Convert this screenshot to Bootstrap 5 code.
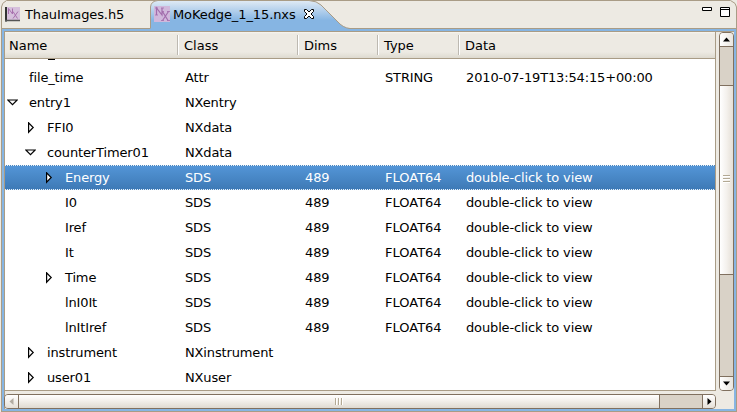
<!DOCTYPE html>
<html lang="en">
<head>
<meta charset="utf-8">
<meta name="viewport" content="width=device-width, initial-scale=1">
<title>MoKedge_1_15.nxs</title>
<link href="https://cdn.jsdelivr.net/npm/bootstrap@5.3.0/dist/css/bootstrap.min.css" rel="stylesheet">
<style>
:root{--tan:#a99c86;--face:#edeae3;--blue:#86b5e3;--edge:#80705f}
body{width:737px;height:412px;background:var(--face);font:13px/25px "DejaVu Sans",sans-serif;color:#000}
svg{display:block;flex:none}
.tabstrip{height:28px}
.shapes{position:absolute;left:0;top:0}
.tab-a{width:150px;padding-left:5px}
.tab-b{padding-left:4px}
.tabtext{line-height:29px;white-space:nowrap;letter-spacing:-.1px}
.tab-a .tabtext{margin-left:5px}
.tab-b .tabtext{margin-left:3px}
.closer{margin-left:7px}
.view{margin-left:1px;width:736px;height:384px;border:1px solid var(--tan);background:var(--blue);padding:2px}
.inner{background:var(--face);border-left:1px solid var(--tan);border-top:1px solid var(--tan)}
.tree{width:711px;height:359px;border-right:1px solid var(--tan);border-bottom:1px solid var(--tan);background:#fff}
.cols{display:grid;grid-template-columns:173px 120px 80px 81px 1fr;white-space:nowrap}
.heads{height:27px;background:linear-gradient(#f7f5f1 0,#edeae3 2px,#edeae3 20px,#dedad0 26px);border-bottom:1px solid var(--tan);line-height:27px}
.heads>div{position:relative;padding-left:6px}
.heads>div:first-child{padding-left:4px}
.heads>div+div::before{content:"";position:absolute;left:-1px;top:3px;width:2px;height:20px;background:linear-gradient(90deg,#bdb9b1 50%,#fff 50%)}
.line{height:25px;letter-spacing:-.14px}
.line>div{padding-left:7px}
.line>.nosqueeze{letter-spacing:0}
.line>div:first-child{display:flex;align-items:center;padding-left:0}
.line svg{margin-right:11px}
.peek{height:6px;overflow:hidden}
.peek i{display:block;width:7px;height:1px;margin-left:43px;background:#000}
.picked{color:#fff;background:linear-gradient(#5496d8,#3d79b5);position:relative}
.picked::before,.picked::after{content:"";position:absolute;left:0;right:0;height:1px;background:repeating-linear-gradient(90deg,#eaf2fb 0 1px,#4b87bf 1px 2px)}
.picked::before{top:0}.picked::after{bottom:0}
.lv0{width:24px}.lv1{width:42px}.lv2{width:60px}
.vbar{width:15px;height:359px;margin-left:3px;border:1px solid var(--edge);border-radius:4px;background:#d9d2c7;overflow:hidden}
.vbar .end{height:14px;flex:none;background:linear-gradient(90deg,#fff,#eae6df)}
.vthumb{height:190px;margin-top:38px;border:solid var(--edge);border-width:1px 0;background:linear-gradient(90deg,#fff,#f4f1ed 50%,#e5dfd6)}
.hbar{width:712px;height:15px;margin:3px 0 0 -1px;border:1px solid var(--edge);border-radius:4px;background:#d9d2c7;overflow:hidden}
.hbar .end{width:13px;flex:none;background:linear-gradient(#fff,#e5e0d8)}
.hthumb{width:642px;border:solid var(--edge);border-width:0 1px;background:linear-gradient(#fff,#f4f1ed 40%,#dfdad1)}
</style>
</head>
<body class="overflow-hidden position-relative">
<svg class="shapes" width="737" height="29">
  <defs><linearGradient id="tabfill" x2="0" y2="1"><stop offset="0" stop-color="#e1ebf5"/><stop offset=".7" stop-color="#86b5e3"/><stop offset="1" stop-color="#86b5e3"/></linearGradient></defs>
  <path d="M1.500 29V7Q1.500 3 6.500 .5H730.500Q736.500 3 736.500 7V29" fill="none" stroke="#a99c86"/>
  <path d="M150.500 29V7Q151 1 158 .5H309Q317 1 321 5L337 21Q343 28 350 28.500V29z" fill="url(#tabfill)"/>
  <path d="M150.500 28V7Q151 1 158 .5H309Q317 1 321 5L337 21Q343 28 350 28.500" fill="none" stroke="#a99c86"/>
</svg>
<div class="tabstrip d-flex position-relative">
  <div class="tab-a d-flex">
    <svg width="15" height="22" viewBox="0 0 15 22"><path d="M1 7H15V20H1z" fill="#d6c0dc"/><path d="M1 7V21.500" stroke="#333" stroke-width="2"/><path d="M0 20.500H15" stroke="#555" stroke-width="1.500"/><path d="M3.500 14V8.500L7.500 14V8.500M8 11.500L12.500 18.500M13 11.500L8 18.500" fill="none" stroke="#a870ae"/></svg>
    <span class="tabtext">ThauImages.h5</span>
  </div>
  <div class="tab-b d-flex">
    <svg width="16" height="22" viewBox="0 0 16 22"><path d="M0 6H16V22H0z" fill="#d0b8dc"/><path d="M2.500 15V8L8 15V8M8.500 11.500L14 20.500M14.500 11.500L8.500 20.500" fill="none" stroke="#a26cac" stroke-width="1.200"/><path d="M1 8H4M7 8H10M1 15H4M8 11.500H10M13 11.500H16M7 20.500H10M13 20.500H16" stroke="#a26cac" stroke-width=".8"/></svg>
    <span class="tabtext">MoKedge_1_15.nxs</span>
    <svg width="12" height="20" class="closer" viewBox="0 0 12 20"><path d="M1.500 9.500H3.500L6 12L8.500 9.500H10.500V11.500L8 14L10.500 16.500V18.500H8.500L6 16L3.500 18.500H1.500V16.500L4 14L1.500 11.500z" fill="#fff" stroke="#000"/></svg>
  </div>
  <svg class="ms-auto me-1" width="33" height="20"><path d="M2.500 7.500H11.500V10.500H2.500zM20.500 7.500H29.500V16.500H20.500zM20.500 9.500H29.500" fill="#fff" stroke="#000"/></svg>
</div>
<main class="view">
  <div class="inner h-100">
    <div class="d-flex">
      <section class="tree overflow-hidden">
        <div class="cols heads"><div>Name</div><div>Class</div><div>Dims</div><div>Type</div><div>Data</div></div>
        <div class="peek"><i></i></div>
        <div id="lines"></div>
      </section>
      <div class="vbar d-flex flex-column">
        <div class="end"><svg width="13" height="14"><path d="M3 8.500L6.500 4.500L10 8.500z"/><path d="M0 13.500H13" stroke="#80705f"/></svg></div>
        <div class="vthumb flex-shrink-0"><svg width="13" height="188"><path d="M3 89.500H10M3 92.500H10M3 95.500H10" stroke="#b3a994"/><path d="M3 90.500H10M3 93.500H10M3 96.500H10" stroke="#fff"/></svg></div>
        <div class="end mt-auto"><svg width="13" height="14"><path d="M0 .5H13" stroke="#80705f"/><path d="M3 5.500L6.500 9.500L10 5.500z"/></svg></div>
      </div>
    </div>
    <div class="hbar d-flex">
      <div class="end"><svg width="13" height="13"><path d="M8.500 3L4.500 6.500L8.500 10z" fill="#b2aca2"/></svg></div>
      <div class="hthumb"><svg width="640" height="13"><path d="M316.500 3V10M319.500 3V10M322.500 3V10" stroke="#b3a994"/><path d="M317.500 3V10M320.500 3V10M323.500 3V10" stroke="#fff"/></svg></div>
      <div class="end ms-auto"><svg width="13" height="13"><path d="M.5 0V13" stroke="#80705f"/><path d="M5.500 3L9.500 6.500L5.500 10z"/></svg></div>
    </div>
  </div>
</main>
<script>
const view='double-click to view';
const data=[
 [0,'','file_time','Attr','','STRING','2010-07-19T13:54:15+00:00'],
 [0,'o','entry1','NXentry'],
 [1,'c','FFI0','NXdata'],
 [1,'o','counterTimer01','NXdata'],
 [2,'c','Energy','SDS','489','FLOAT64',view],
 [2,'','I0','SDS','489','FLOAT64',view],
 [2,'','Iref','SDS','489','FLOAT64',view],
 [2,'','It','SDS','489','FLOAT64',view],
 [2,'c','Time','SDS','489','FLOAT64',view],
 [2,'','lnI0It','SDS','489','FLOAT64',view],
 [2,'','lnItIref','SDS','489','FLOAT64',view],
 [1,'c','instrument','NXinstrument'],
 [1,'c','user01','NXuser']];
const arrows={
 o:'<svg width="11" height="12"><path d="M.8 3H10.200L5.500 7.700z" fill="#fff" stroke="#000" stroke-width="1.200"/></svg>',
 c:'<svg width="11" height="12"><path d="M3.600 .8V10.200L8.200 5.500z" fill="#fff" stroke="#000" stroke-width="1.200"/></svg>','':''};
document.getElementById('lines').innerHTML=data.map(r=>
 `<div class="cols line${r[2]==='Energy'?' picked':''}"><div><span class="lv${r[0]} d-flex justify-content-end flex-shrink-0">${arrows[r[1]]}</span><span>${r[2]}</span></div>`+
 [3,4,5,6].map(i=>`<div${r[i]==='FLOAT64'?' class="nosqueeze"':''}>${r[i]||''}</div>`).join('')+'</div>').join('');
</script>
<script src="https://cdn.jsdelivr.net/npm/bootstrap@5.3.0/dist/js/bootstrap.bundle.min.js"></script>
</body>
</html>
